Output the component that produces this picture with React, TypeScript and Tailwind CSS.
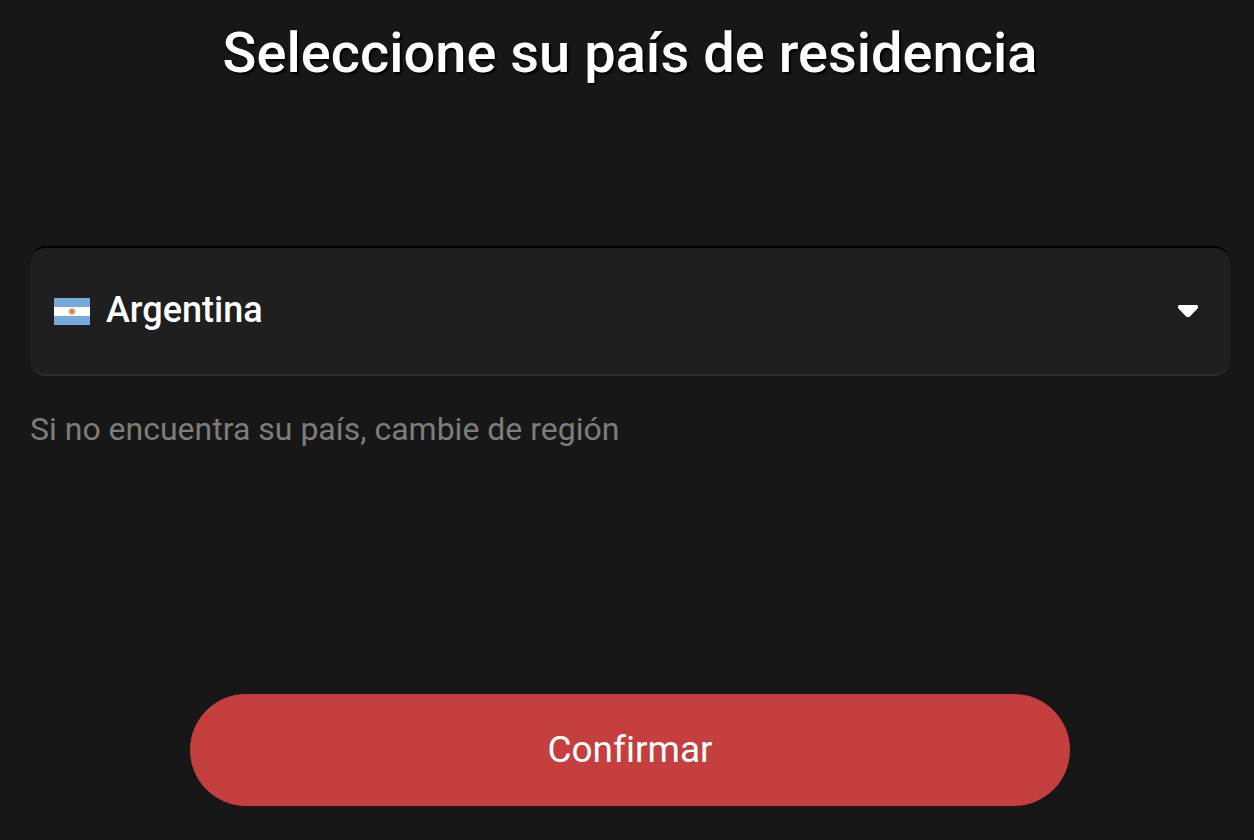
import React, { useState } from 'react';

const Flag = () => (
  <svg viewBox="0 0 36 27" className="pointer-events-none col-start-1 row-start-1 ml-6 h-[27px] w-9" aria-hidden="true">
    <rect width="36" height="27" fill="#75aadb" />
    <rect y="9" width="36" height="9" fill="#fff" />
    <circle cx="18" cy="13.5" r="3.2" fill="#e0ac7c" stroke="#e0ac7c" strokeWidth="1" strokeDasharray="1 0.7" />
    <circle cx="18" cy="13.5" r="1.8" fill="#c28652" />
  </svg>
);

const Caret = () => (
  <svg viewBox="0 0 22 16" className="pointer-events-none col-start-1 row-start-1 mr-[31px] h-4 w-[22px] justify-self-end" aria-hidden="true">
    <path d="M2.5 3.5H19.5V4.5L11.8 12.5H10.2L2.5 4.5Z" fill="#fff" stroke="#fff" strokeWidth="3" strokeLinejoin="round" />
  </svg>
);

const App = () => {
  const [country, setCountry] = useState('AR');

  return (
    <main className="flex min-h-screen flex-col bg-[#171717] pt-5 pr-6 pb-[34px] pl-[30px] font-[Roboto,sans-serif] text-white">
      <h1 className="text-center text-[56px] leading-[66px] font-medium [text-shadow:2px_2px_2px_#000]">
        Seleccione su país de residencia
      </h1>

      <form className="flex grow flex-col pt-40" onSubmit={(e) => e.preventDefault()}>
        <div className="grid items-center">
          <select
            id="country"
            aria-label="País de residencia"
            value={country}
            onChange={(e) => setCountry(e.target.value)}
            className="col-start-1 row-start-1 h-[130px] w-full appearance-none rounded-2xl border-y-2 border-t-black border-b-[#2e2e2e] bg-[#1f1f1f] pb-0.5 pl-[76px] text-4xl font-medium text-white"
          >
            <option value="AR">Argentina</option>
          </select>
          <Flag />
          <Caret />
        </div>
        <p className="pt-8 text-[32px] leading-[42px] text-[#7d7d7d]">
          Si no encuentra su país, cambie de región
        </p>

        <button
          type="submit"
          className="mx-auto mt-auto h-28 w-full max-w-[880px] rounded-full bg-[#c53f3f] text-[37px] [font-variant-ligatures:none]"
        >
          Confirmar
        </button>
      </form>
    </main>
  );
};

export default App;
